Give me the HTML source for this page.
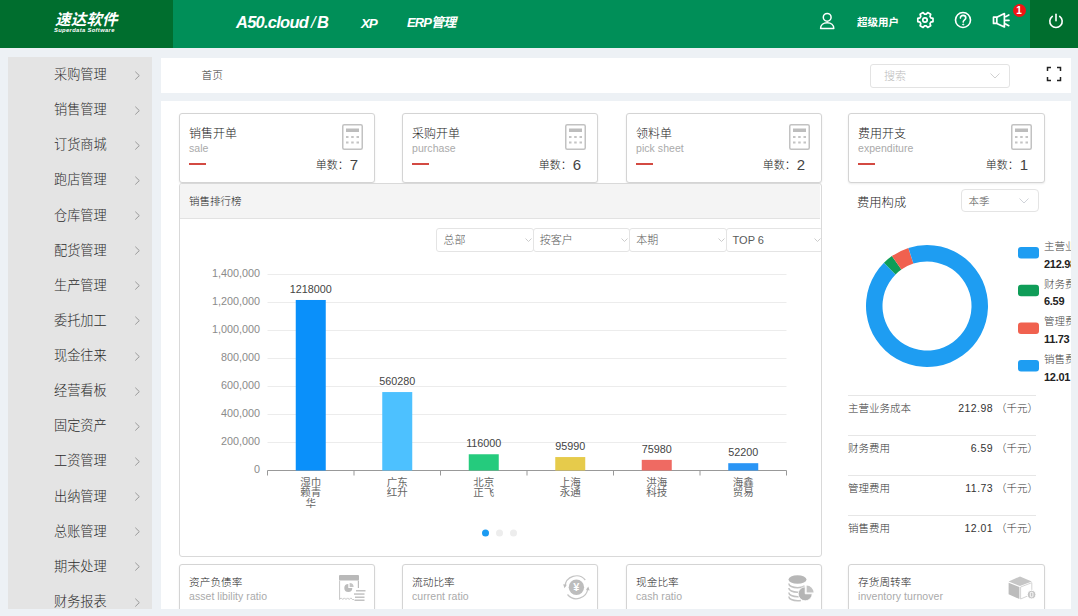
<!DOCTYPE html>
<html lang="zh-CN">
<head>
<meta charset="utf-8">
<title>速达软件 A50.cloud</title>
<style>
*{box-sizing:border-box;margin:0;padding:0}
html,body{width:1078px;height:616px;overflow:hidden}
body{background:#edf1f5;font-family:"Liberation Sans","Noto Sans CJK SC",sans-serif;color:#333;position:relative;font-size:12px}
#hdr{position:absolute;left:0;top:0;width:1078px;height:48px;background:#008f58}
#logo{position:absolute;left:0;top:0;width:173px;height:48px;background:#006e2e;color:#fff}
#logo .cn{position:absolute;left:55px;top:8.700px;font-size:15.500px;font-weight:bold;font-style:italic;letter-spacing:.2px;line-height:22px;white-space:nowrap}
#logo .en{position:absolute;left:54px;top:26.500px;font-size:5.800px;font-weight:bold;font-style:italic;line-height:6px;white-space:nowrap;letter-spacing:.35px}
.nav{position:absolute;top:0;height:48px;color:#fff;font-style:italic;font-weight:bold;white-space:nowrap}
#n1{left:236px;font-size:16.500px;line-height:44px;letter-spacing:-.75px}
#n1 .sl{font-weight:normal;margin:0 2px 0 3px}
#n2{left:361px;font-size:13.500px;line-height:47px;letter-spacing:-1.200px}
#n3{left:407px;font-size:13px;line-height:46px;letter-spacing:-.9px}
#n4{left:857px;font-size:10.500px;font-style:normal;line-height:45px}
#pwr{position:absolute;left:1030px;top:0;width:48px;height:48px;background:#006e2e}
#badge{position:absolute;left:1012.500px;top:4px;width:13px;height:13px;border-radius:50%;background:#f01414;color:#fff;font-size:10px;font-weight:bold;line-height:13px;text-align:center}
.hic{position:absolute}
#side{position:absolute;left:8px;top:57px;width:144px;height:552px;background:#e4e4e4;overflow:hidden}
#side .it{position:absolute;left:46px;height:20px;line-height:20px;font-size:13.200px;font-weight:300;color:#2b2b2b;white-space:nowrap}
#side .ch{position:absolute;left:124.700px}
#crumb{position:absolute;left:161px;top:58px;width:910px;height:35px;background:#fff}
#crumb .t{position:absolute;left:40.500px;top:0;line-height:35px;font-size:10.700px;font-weight:300;color:#333}
#search{position:absolute;left:709px;top:6px;width:140px;height:24px;border:1px solid #e3e3e3;border-radius:3px;background:#fff}
#search .ph{position:absolute;left:13px;top:0;line-height:22px;font-size:11px;font-weight:300;color:#bbb}
#content{position:absolute;left:161px;top:101px;width:910px;height:508px;background:#fff;overflow:hidden}
#in{position:absolute;left:9px;top:0;width:901px;height:508px;overflow:hidden}
.card{position:absolute;width:196px;height:70px;border:1px solid #d4d4d4;border-radius:3px;background:#fff;box-shadow:0 1px 2px rgba(0,0,0,.08)}
.card .t{position:absolute;left:9px;top:12px;font-size:12px;font-weight:300;line-height:16px;color:#222;white-space:nowrap}
.card .s{position:absolute;left:9px;top:28px;font-size:10.500px;line-height:13px;color:#aaa;white-space:nowrap;letter-spacing:.05px}
.card .d{position:absolute;left:9px;top:49px;width:17px;height:2px;background:#d34a42}
.card .n{position:absolute;right:16px;top:41px;font-size:11px;font-weight:300;line-height:20px;color:#222;white-space:nowrap}
.card .n b{font-weight:normal;font-size:15px;color:#444;margin-left:1px;vertical-align:-1px}
.card svg{position:absolute}
.bc .t{top:9px;font-size:10.700px}
.bc .s{top:25.300px}
#chart{position:absolute;left:9px;top:82px;width:643px;height:374px;border:1px solid #d9d9d9;border-radius:3px;background:#fff;overflow:hidden}
#chart .hd{position:absolute;left:0;top:0;width:640px;height:35px;background:#f4f4f4;border-bottom:1px solid #e2e2e2;font-size:10.500px;font-weight:300;line-height:34px;padding-left:9px;color:#222}
.sel{position:absolute;height:24px;border:1px solid #e4e4e4;border-radius:3px;background:#fff;font-size:11px;font-weight:300;line-height:22px;color:#5a5a5a;padding-left:6px;white-space:nowrap}
.rt{position:absolute;left:687px;top:92.700px;font-size:12.300px;font-weight:300;line-height:18px;color:#222}
.lg{position:absolute;left:874px;font-size:10.500px;font-weight:300;line-height:14px;color:#444;white-space:nowrap}
.lgv{position:absolute;left:874px;letter-spacing:-.3px;font-size:11px;line-height:15px;color:#222;font-weight:bold;white-space:nowrap}
.row{position:absolute;left:678px;width:188px;height:40px;border-top:1px solid #e6e6e6;font-size:10.500px;font-weight:300;line-height:25px;color:#333}
.row .l{position:absolute;left:0;top:0}
.row .r{position:absolute;right:-2px;top:0;white-space:nowrap}
.row .r i{font-style:normal;letter-spacing:.45px}
</style>
</head>
<body>
<div id="hdr">
  <div id="logo"><div class="cn">速达软件</div><div class="en">Superdata Software</div></div>
  <div class="nav" id="n1">A50.cloud<span class="sl">/</span>B</div>
  <div class="nav" id="n2">XP</div>
  <div class="nav" id="n3">ERP管理</div>
  <svg class="hic" style="left:817px;top:11px" width="20" height="20" viewBox="0 0 20 20" fill="none" stroke="#fff" stroke-width="1.500"><circle cx="10.200" cy="6.300" r="3.900"/><path d="M3.600 17.600c0-3.600 2.800-5.800 6.600-5.800s6.600 2.200 6.600 5.800z" stroke-linejoin="round"/></svg>
  <div class="nav" id="n4">超级用户</div>
  <svg class="hic" style="left:915px;top:10.200px" width="20" height="20" viewBox="0 0 20 20" fill="none" stroke="#fff" stroke-width="1.700" stroke-linejoin="round"><g transform="rotate(90 10 10)"><path d="M8.300 2h3.400l.5 2.200 1.400.8 2.100-.7 1.700 3-1.600 1.500v1.600l1.600 1.500-1.700 3-2.100-.7-1.400.8-.5 2.200h-3.400l-.5-2.200-1.400-.8-2.100.7-1.700-3 1.600-1.500v-1.600l-1.600-1.500 1.700-3 2.100.7 1.400-.8z"/></g><circle cx="10" cy="10" r="2.200"/></svg>
  <svg class="hic" style="left:953px;top:10.200px" width="20" height="20" viewBox="0 0 20 20" fill="none" stroke="#fff" stroke-width="1.600"><circle cx="10" cy="10" r="7.500"/><path d="M7.400 8.100c0-1.600 1.100-2.700 2.700-2.700s2.700 1 2.700 2.500c0 1.900-2.600 2.100-2.600 4.200" stroke-linecap="round"/><circle cx="10.200" cy="14.500" r=".6" fill="#fff" stroke-width="1"/></svg>
  <svg class="hic" style="left:991px;top:12px" width="20" height="18" viewBox="0 0 20 18" fill="none" stroke="#fff" stroke-width="1.700"><path d="M2.500 5.200h3.300l7.600-3.600v13.400l-7.600-3.600h-3.300z" stroke-linejoin="round"/><path d="M5.800 5.200v6.200"/><path d="M14.600 8.300h3.400M14.600 4.700l3.200-1.800M14.600 11.900l3.200 1.800" stroke-linecap="round"/></svg>
  <div id="badge">1</div>
  <div id="pwr"><svg width="20" height="20" viewBox="0 0 20 20" fill="none" stroke="#fff" stroke-width="1.600" stroke-linecap="round" style="position:absolute;left:15.500px;top:11px"><path d="M10 3.200v6.600"/><path d="M6.300 5.400a6.200 6.200 0 1 0 7.400 0"/></svg></div>
</div>
<div id="side">
  <div class="it" style="top:8.0px">采购管理</div><svg class="ch" style="top:12.5px" width="8" height="11" viewBox="0 0 8 11" fill="none" stroke="#999" stroke-width="1"><path d="M2.300 1.700l4 3.900-4 3.900"/></svg>
  <div class="it" style="top:43.1px">销售管理</div><svg class="ch" style="top:47.6px" width="8" height="11" viewBox="0 0 8 11" fill="none" stroke="#999" stroke-width="1"><path d="M2.300 1.700l4 3.900-4 3.900"/></svg>
  <div class="it" style="top:78.3px">订货商城</div><svg class="ch" style="top:82.8px" width="8" height="11" viewBox="0 0 8 11" fill="none" stroke="#999" stroke-width="1"><path d="M2.300 1.700l4 3.900-4 3.900"/></svg>
  <div class="it" style="top:113.4px">跑店管理</div><svg class="ch" style="top:117.9px" width="8" height="11" viewBox="0 0 8 11" fill="none" stroke="#999" stroke-width="1"><path d="M2.300 1.700l4 3.900-4 3.900"/></svg>
  <div class="it" style="top:148.5px">仓库管理</div><svg class="ch" style="top:153.0px" width="8" height="11" viewBox="0 0 8 11" fill="none" stroke="#999" stroke-width="1"><path d="M2.300 1.700l4 3.900-4 3.900"/></svg>
  <div class="it" style="top:183.7px">配货管理</div><svg class="ch" style="top:188.2px" width="8" height="11" viewBox="0 0 8 11" fill="none" stroke="#999" stroke-width="1"><path d="M2.300 1.700l4 3.900-4 3.900"/></svg>
  <div class="it" style="top:218.8px">生产管理</div><svg class="ch" style="top:223.3px" width="8" height="11" viewBox="0 0 8 11" fill="none" stroke="#999" stroke-width="1"><path d="M2.300 1.700l4 3.900-4 3.900"/></svg>
  <div class="it" style="top:253.9px">委托加工</div><svg class="ch" style="top:258.4px" width="8" height="11" viewBox="0 0 8 11" fill="none" stroke="#999" stroke-width="1"><path d="M2.300 1.700l4 3.900-4 3.900"/></svg>
  <div class="it" style="top:289.0px">现金往来</div><svg class="ch" style="top:293.5px" width="8" height="11" viewBox="0 0 8 11" fill="none" stroke="#999" stroke-width="1"><path d="M2.300 1.700l4 3.900-4 3.900"/></svg>
  <div class="it" style="top:324.2px">经营看板</div><svg class="ch" style="top:328.7px" width="8" height="11" viewBox="0 0 8 11" fill="none" stroke="#999" stroke-width="1"><path d="M2.300 1.700l4 3.900-4 3.900"/></svg>
  <div class="it" style="top:359.3px">固定资产</div><svg class="ch" style="top:363.8px" width="8" height="11" viewBox="0 0 8 11" fill="none" stroke="#999" stroke-width="1"><path d="M2.300 1.700l4 3.900-4 3.900"/></svg>
  <div class="it" style="top:394.4px">工资管理</div><svg class="ch" style="top:398.9px" width="8" height="11" viewBox="0 0 8 11" fill="none" stroke="#999" stroke-width="1"><path d="M2.300 1.700l4 3.900-4 3.900"/></svg>
  <div class="it" style="top:429.6px">出纳管理</div><svg class="ch" style="top:434.1px" width="8" height="11" viewBox="0 0 8 11" fill="none" stroke="#999" stroke-width="1"><path d="M2.300 1.700l4 3.900-4 3.900"/></svg>
  <div class="it" style="top:464.7px">总账管理</div><svg class="ch" style="top:469.2px" width="8" height="11" viewBox="0 0 8 11" fill="none" stroke="#999" stroke-width="1"><path d="M2.300 1.700l4 3.900-4 3.900"/></svg>
  <div class="it" style="top:499.8px">期末处理</div><svg class="ch" style="top:504.3px" width="8" height="11" viewBox="0 0 8 11" fill="none" stroke="#999" stroke-width="1"><path d="M2.300 1.700l4 3.900-4 3.900"/></svg>
  <div class="it" style="top:535.0px">财务报表</div><svg class="ch" style="top:539.5px" width="8" height="11" viewBox="0 0 8 11" fill="none" stroke="#999" stroke-width="1"><path d="M2.300 1.700l4 3.900-4 3.900"/></svg>
</div>
<div id="crumb">
  <div class="t">首页</div>
  <div id="search"><div class="ph">搜索</div><svg style="position:absolute;left:119px;top:8px" width="10" height="6" viewBox="0 0 10 6" fill="none" stroke="#d0d0d0" stroke-width="1"><path d="M.5.500l4.500 4.500 4.500-4.500"/></svg></div>
  <svg style="position:absolute;left:885px;top:8px" width="16" height="16" viewBox="0 0 16 16" fill="none" stroke="#222" stroke-width="1.500"><path d="M1.500 5v-3.500h3.500M11 1.500h3.500v3.500M14.500 11v3.500h-3.500M5 14.500h-3.500v-3.500"/></svg>
</div>
<div id="content"><div id="in">
<div class="card" style="left:9px;top:12px;width:196px"><div class="t">销售开单</div><div class="s">sale</div><div class="d"></div><div class="n">单数：<b>7</b></div><svg style="left:162px;top:10px" width="21" height="26" viewBox="0 0 21 26"><rect x=".75" y=".75" width="19.500" height="24.500" rx="1.500" fill="#fff" stroke="#c2c2c2" stroke-width="1.500"/><rect x="4" y="4.500" width="13" height="3.500" fill="#bdbdbd"/><g fill="#c4c4c4"><rect x="4" y="12" width="2.500" height="2"/><rect x="9.200" y="12" width="2.500" height="2"/><rect x="14.500" y="12" width="2.500" height="2"/><rect x="4" y="17.500" width="2.500" height="2"/><rect x="9.200" y="17.500" width="2.500" height="2"/><rect x="14.500" y="17.500" width="2.500" height="2"/></g></svg></div>
<div class="card" style="left:232px;top:12px;width:196px"><div class="t">采购开单</div><div class="s">purchase</div><div class="d"></div><div class="n">单数：<b>6</b></div><svg style="left:162px;top:10px" width="21" height="26" viewBox="0 0 21 26"><rect x=".75" y=".75" width="19.500" height="24.500" rx="1.500" fill="#fff" stroke="#c2c2c2" stroke-width="1.500"/><rect x="4" y="4.500" width="13" height="3.500" fill="#bdbdbd"/><g fill="#c4c4c4"><rect x="4" y="12" width="2.500" height="2"/><rect x="9.200" y="12" width="2.500" height="2"/><rect x="14.500" y="12" width="2.500" height="2"/><rect x="4" y="17.500" width="2.500" height="2"/><rect x="9.200" y="17.500" width="2.500" height="2"/><rect x="14.500" y="17.500" width="2.500" height="2"/></g></svg></div>
<div class="card" style="left:456px;top:12px;width:196px"><div class="t">领料单</div><div class="s">pick sheet</div><div class="d"></div><div class="n">单数：<b>2</b></div><svg style="left:162px;top:10px" width="21" height="26" viewBox="0 0 21 26"><rect x=".75" y=".75" width="19.500" height="24.500" rx="1.500" fill="#fff" stroke="#c2c2c2" stroke-width="1.500"/><rect x="4" y="4.500" width="13" height="3.500" fill="#bdbdbd"/><g fill="#c4c4c4"><rect x="4" y="12" width="2.500" height="2"/><rect x="9.200" y="12" width="2.500" height="2"/><rect x="14.500" y="12" width="2.500" height="2"/><rect x="4" y="17.500" width="2.500" height="2"/><rect x="9.200" y="17.500" width="2.500" height="2"/><rect x="14.500" y="17.500" width="2.500" height="2"/></g></svg></div>
<div class="card" style="left:678px;top:12px;width:197px"><div class="t">费用开支</div><div class="s">expenditure</div><div class="d"></div><div class="n">单数：<b>1</b></div><svg style="left:162px;top:10px" width="21" height="26" viewBox="0 0 21 26"><rect x=".75" y=".75" width="19.500" height="24.500" rx="1.500" fill="#fff" stroke="#c2c2c2" stroke-width="1.500"/><rect x="4" y="4.500" width="13" height="3.500" fill="#bdbdbd"/><g fill="#c4c4c4"><rect x="4" y="12" width="2.500" height="2"/><rect x="9.200" y="12" width="2.500" height="2"/><rect x="14.500" y="12" width="2.500" height="2"/><rect x="4" y="17.500" width="2.500" height="2"/><rect x="9.200" y="17.500" width="2.500" height="2"/><rect x="14.500" y="17.500" width="2.500" height="2"/></g></svg></div>
<div id="chart"><div class="hd">销售排行榜</div>
<div class="sel" style="left:256.4px;top:44px;width:97.400px">总部<svg style="position:absolute;right:1px;top:9px" width="7" height="5" viewBox="0 0 7 5" fill="none" stroke="#ccc" stroke-width="1"><path d="M.5.500l3 3 3-3"/></svg></div>
<div class="sel" style="left:352.8px;top:44px;width:97.400px">按客户<svg style="position:absolute;right:1px;top:9px" width="7" height="5" viewBox="0 0 7 5" fill="none" stroke="#ccc" stroke-width="1"><path d="M.5.500l3 3 3-3"/></svg></div>
<div class="sel" style="left:449.2px;top:44px;width:97.400px">本期<svg style="position:absolute;right:1px;top:9px" width="7" height="5" viewBox="0 0 7 5" fill="none" stroke="#ccc" stroke-width="1"><path d="M.5.500l3 3 3-3"/></svg></div>
<div class="sel" style="left:545.6px;top:44px;width:97.400px">TOP 6<svg style="position:absolute;right:1px;top:9px" width="7" height="5" viewBox="0 0 7 5" fill="none" stroke="#ccc" stroke-width="1"><path d="M.5.500l3 3 3-3"/></svg></div>
<svg style="position:absolute;left:0;top:0" width="640" height="370" viewBox="0 0 640 370" font-family="Liberation Sans, Noto Sans CJK SC, sans-serif">
<line x1="87.5" y1="286.5" x2="606.5" y2="286.5" stroke="#999" stroke-width="1"/>
<text x="80" y="289.4" text-anchor="end" font-size="10.800" fill="#8a8a8a">0</text>
<line x1="87.5" y1="258.5" x2="606.5" y2="258.5" stroke="#ececec" stroke-width="1"/>
<text x="80" y="261.4" text-anchor="end" font-size="10.800" fill="#8a8a8a">200,000</text>
<line x1="87.5" y1="230.5" x2="606.5" y2="230.5" stroke="#ececec" stroke-width="1"/>
<text x="80" y="233.4" text-anchor="end" font-size="10.800" fill="#8a8a8a">400,000</text>
<line x1="87.5" y1="202.5" x2="606.5" y2="202.5" stroke="#ececec" stroke-width="1"/>
<text x="80" y="205.4" text-anchor="end" font-size="10.800" fill="#8a8a8a">600,000</text>
<line x1="87.5" y1="174.5" x2="606.5" y2="174.5" stroke="#ececec" stroke-width="1"/>
<text x="80" y="177.4" text-anchor="end" font-size="10.800" fill="#8a8a8a">800,000</text>
<line x1="87.5" y1="146.5" x2="606.5" y2="146.5" stroke="#ececec" stroke-width="1"/>
<text x="80" y="149.4" text-anchor="end" font-size="10.800" fill="#8a8a8a">1,000,000</text>
<line x1="87.5" y1="118.5" x2="606.5" y2="118.5" stroke="#ececec" stroke-width="1"/>
<text x="80" y="121.4" text-anchor="end" font-size="10.800" fill="#8a8a8a">1,200,000</text>
<line x1="87.5" y1="90.5" x2="606.5" y2="90.5" stroke="#ececec" stroke-width="1"/>
<text x="80" y="93.4" text-anchor="end" font-size="10.800" fill="#8a8a8a">1,400,000</text>
<line x1="87.50" y1="286.5" x2="87.50" y2="291.5" stroke="#999" stroke-width="1"/>
<line x1="174.00" y1="286.5" x2="174.00" y2="291.5" stroke="#999" stroke-width="1"/>
<line x1="260.50" y1="286.5" x2="260.50" y2="291.5" stroke="#999" stroke-width="1"/>
<line x1="347.00" y1="286.5" x2="347.00" y2="291.5" stroke="#999" stroke-width="1"/>
<line x1="433.50" y1="286.5" x2="433.50" y2="291.5" stroke="#999" stroke-width="1"/>
<line x1="520.00" y1="286.5" x2="520.00" y2="291.5" stroke="#999" stroke-width="1"/>
<line x1="606.50" y1="286.5" x2="606.50" y2="291.5" stroke="#999" stroke-width="1"/>
<rect x="115.75" y="115.98" width="30" height="170.52" fill="#0a90fa"/>
<text x="130.75" y="108.78" text-anchor="middle" font-size="10.800" fill="#444">1218000</text>
<text x="130.75" y="302.00" text-anchor="middle" font-size="10.500" fill="#666">湿巾</text>
<text x="130.75" y="312.30" text-anchor="middle" font-size="10.500" fill="#666">赖青</text>
<text x="130.75" y="322.60" text-anchor="middle" font-size="10.500" fill="#666">华</text>
<rect x="202.25" y="208.06" width="30" height="78.44" fill="#4dc1ff"/>
<text x="217.25" y="200.86" text-anchor="middle" font-size="10.800" fill="#444">560280</text>
<text x="217.25" y="302.00" text-anchor="middle" font-size="10.500" fill="#666">广东</text>
<text x="217.25" y="312.30" text-anchor="middle" font-size="10.500" fill="#666">红升</text>
<rect x="288.75" y="270.26" width="30" height="16.24" fill="#25cb7d"/>
<text x="303.75" y="263.06" text-anchor="middle" font-size="10.800" fill="#444">116000</text>
<text x="303.75" y="302.00" text-anchor="middle" font-size="10.500" fill="#666">北京</text>
<text x="303.75" y="312.30" text-anchor="middle" font-size="10.500" fill="#666">正飞</text>
<rect x="375.25" y="273.06" width="30" height="13.44" fill="#e6cb4b"/>
<text x="390.25" y="265.86" text-anchor="middle" font-size="10.800" fill="#444">95990</text>
<text x="390.25" y="302.00" text-anchor="middle" font-size="10.500" fill="#666">上海</text>
<text x="390.25" y="312.30" text-anchor="middle" font-size="10.500" fill="#666">永通</text>
<rect x="461.75" y="275.86" width="30" height="10.64" fill="#ef6a62"/>
<text x="476.75" y="268.66" text-anchor="middle" font-size="10.800" fill="#444">75980</text>
<text x="476.75" y="302.00" text-anchor="middle" font-size="10.500" fill="#666">洪海</text>
<text x="476.75" y="312.30" text-anchor="middle" font-size="10.500" fill="#666">科技</text>
<rect x="548.25" y="279.19" width="30" height="7.31" fill="#2a95f5"/>
<text x="563.25" y="271.99" text-anchor="middle" font-size="10.800" fill="#444">52200</text>
<text x="563.25" y="302.00" text-anchor="middle" font-size="10.500" fill="#666">海鑫</text>
<text x="563.25" y="312.30" text-anchor="middle" font-size="10.500" fill="#666">贸易</text>
<circle cx="305.5" cy="349" r="3.500" fill="#1b9bf2"/>
<circle cx="319.5" cy="349" r="3.500" fill="#ededed"/>
<circle cx="333.5" cy="349" r="3.500" fill="#ededed"/>
</svg>
</div>
<div class="rt">费用构成</div>
<div class="sel" style="left:791px;top:88px;width:78px;height:23px;border-radius:4px;color:#555;padding-left:6.500px;font-size:10.500px">本季<svg style="position:absolute;right:9px;top:8px" width="10" height="6" viewBox="0 0 10 6" fill="none" stroke="#d0d3d9" stroke-width="1"><path d="M.5.500l4.500 4.500 4.500-4.500"/></svg></div>
<svg style="position:absolute;left:0;top:0" width="900" height="507" viewBox="0 0 900 507">
<path d="M757.00 144.00A61 61 0 1 1 713.96 161.77L725.60 173.47A44.5 44.5 0 1 0 757.00 160.50Z" fill="#1e9df2"/>
<path d="M713.96 161.77A61 61 0 0 1 721.90 155.11L731.40 168.60A44.5 44.5 0 0 0 725.60 173.47Z" fill="#0f9d58"/>
<path d="M721.90 155.11A61 61 0 0 1 738.38 146.91L743.42 162.62A44.5 44.5 0 0 0 731.40 168.60Z" fill="#f0614f"/>
<path d="M738.38 146.91A61 61 0 0 1 757.00 144.00L757.00 160.50A44.5 44.5 0 0 0 743.42 162.62Z" fill="#1e9df2"/>
<rect x="848" y="146.0" width="21" height="11.500" rx="3" fill="#1e9df2"/>
<rect x="848" y="183.7" width="21" height="11.500" rx="3" fill="#0f9d58"/>
<rect x="848" y="221.4" width="21" height="11.500" rx="3" fill="#f0614f"/>
<rect x="848" y="259.1" width="21" height="11.500" rx="3" fill="#1e9df2"/>
</svg>
<div class="lg" style="top:138.0px">主营业务成本</div><div class="lgv" style="top:155.5px">212.98</div>
<div class="lg" style="top:175.7px">财务费用</div><div class="lgv" style="top:193.2px">6.59</div>
<div class="lg" style="top:213.4px">管理费用</div><div class="lgv" style="top:230.9px">11.73</div>
<div class="lg" style="top:251.1px">销售费用</div><div class="lgv" style="top:268.6px">12.01</div>
<div class="row" style="top:293.5px"><span class="l">主营业务成本</span><span class="r"><i>212.98</i> （千元）</span></div>
<div class="row" style="top:333.6px"><span class="l">财务费用</span><span class="r"><i>6.59</i> （千元）</span></div>
<div class="row" style="top:373.7px"><span class="l">管理费用</span><span class="r"><i>11.73</i> （千元）</span></div>
<div class="row" style="top:413.8px"><span class="l">销售费用</span><span class="r"><i>12.01</i> （千元）</span></div>
<div class="card bc" style="left:9px;top:463px;width:196px"><div class="t">资产负债率</div><div class="s">asset libility ratio</div><svg style="left:159px;top:10px" width="28" height="27" viewBox="0 0 28 27"><rect x="0" y="0" width="20" height="5.500" rx="1" fill="#b9b9b9"/><path d="M.6 5.500V24.500l1.600-1.600 1.600 1.600 1.600-1.600 1.600 1.600 1.600-1.600 1.600 1.600 1.600-1.600 1.600 1.600h1.500" fill="none" stroke="#c6c6c6" stroke-width="1"/><path d="M19.400 5.500V13" fill="none" stroke="#bdbdbd" stroke-width="1.200"/><path d="M9.300 9.100a4 4 0 1 0 4 4h-4z" fill="#bcbcbc"/><path d="M10.600 8a4 4 0 0 1 4 4h-4z" fill="#c6c6c6"/><g fill="#c2c2c2"><rect x="17" y="15" width="9.500" height="1.500"/><rect x="15" y="18.300" width="10.500" height="1.500"/><rect x="16" y="21.500" width="9.500" height="1.500"/><rect x="15.500" y="24.500" width="10" height="1.500"/></g></svg></div>
<div class="card bc" style="left:232px;top:463px;width:196px"><div class="t">流动比率</div><div class="s">current ratio</div><svg style="left:159px;top:8px" width="28" height="28" viewBox="0 0 28 28" font-family="Liberation Sans, sans-serif"><circle cx="14.400" cy="14.300" r="7.700" fill="#bdbdbd"/><text x="14.400" y="18.300" text-anchor="middle" font-size="11" font-weight="bold" fill="#fff">¥</text><path d="M3 13.500A11.500 11.500 0 0 1 23.300 7" fill="none" stroke="#c4c4c4" stroke-width="1.200"/><path d="M25.800 15.200A11.500 11.500 0 0 1 5.500 21.500" fill="none" stroke="#c4c4c4" stroke-width="1.200"/><path d="M1.200 11.200l3.600.6-2.300 3.400z" fill="#bdbdbd"/><path d="M27.600 17.400l-3.600-.6 2.300-3.400z" fill="#bdbdbd"/></svg></div>
<div class="card bc" style="left:456px;top:463px;width:196px"><div class="t">现金比率</div><div class="s">cash ratio</div><svg style="left:161px;top:9px" width="28" height="28" viewBox="0 0 28 28"><ellipse cx="9.500" cy="5.500" rx="9" ry="4.300" fill="#b7b7b7"/><g fill="none" stroke="#c2c2c2" stroke-width="1.500"><path d="M.8 9.500c0 2.300 3.900 4.200 8.700 4.200 3 0 5.500-.7 7.100-1.700"/><path d="M.8 14c0 2.300 3.900 4.200 8.700 4.200 1 0 2-.1 2.800-.2"/><path d="M.8 18.500c0 2.300 3.900 4.200 8.700 4.200.6 0 1.200 0 1.800-.1"/><path d="M.8 22.500c0 2.300 3.900 4.200 8.700 4.200 1.200 0 2.400-.1 3.400-.3"/></g><path d="M17.200 12.800a7 7 0 1 0 7 7h-7z" fill="#b5b5b5" stroke="#fff" stroke-width=".8"/><path d="M18.600 11.600a7 7 0 0 1 7 7h-7z" fill="#c3c3c3"/></svg></div>
<div class="card bc" style="left:678px;top:463px;width:197px"><div class="t">存货周转率</div><div class="s">inventory turnover</div><svg style="left:159px;top:11px" width="30" height="25" viewBox="0 0 30 25"><polygon points=".6,5.600 12,.4 23.800,5.600 12,10" fill="#c6c6c6"/><polygon points=".6,6.700 11.400,11 11.400,23 .6,18.200" fill="#bcbcbc"/><polygon points="12.600,11 23.800,6.700 23.800,18.200 12.600,23" fill="#fff" stroke="#d4d4d4" stroke-width="1"/><circle cx="23.600" cy="18.600" r="4.300" fill="#c4c4c4" stroke="#fff" stroke-width="1"/><rect x="22.300" y="16.300" width="2.600" height="4.600" rx=".8" fill="none" stroke="#fff" stroke-width=".9"/></svg>
</div>
</div></div>
</body>
</html>
